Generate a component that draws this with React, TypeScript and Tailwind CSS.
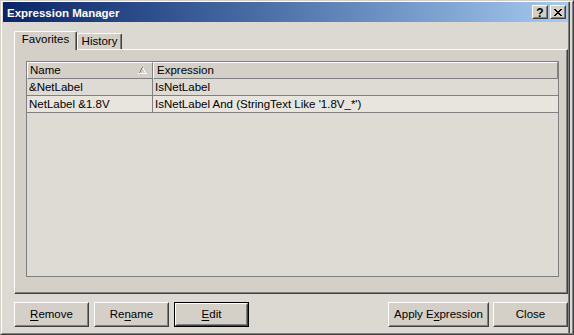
import React from "react";

function Raised({ className = "", children }: { className?: string; children?: React.ReactNode }) {
  return (
    <div className={`border border-t-white border-l-white border-r-[#404040] border-b-[#404040] bg-[#d4d0c8] ${className}`}>
      <div className="w-full h-full border border-t-[#d4d0c8] border-l-[#d4d0c8] border-r-[#808080] border-b-[#808080] flex items-center justify-center">
        {children}
      </div>
    </div>
  );
}

function CloseGlyph() {
  const rows = [
    [0, 1, 6, 7],
    [1, 2, 5, 6],
    [2, 3, 4, 5],
    [3, 4],
    [2, 3, 4, 5],
    [1, 2, 5, 6],
    [0, 1, 6, 7],
  ];
  return (
    <svg width="8" height="7" viewBox="0 0 8 7" shapeRendering="crispEdges">
      {rows.map((cols, y) =>
        cols.map((x) => <rect key={`${x}-${y}`} x={x} y={y} width="1" height="1" fill="#000" />)
      )}
    </svg>
  );
}

function SortUp() {
  return (
    <svg width="9" height="7" viewBox="0 0 9 7" shapeRendering="crispEdges">
      <rect x="4" y="0" width="1" height="1" fill="#808080" />
      <rect x="3" y="1" width="1" height="2" fill="#808080" />
      <rect x="5" y="1" width="1" height="2" fill="#ffffff" />
      <rect x="2" y="3" width="1" height="2" fill="#808080" />
      <rect x="6" y="3" width="1" height="2" fill="#ffffff" />
      <rect x="1" y="5" width="1" height="1" fill="#808080" />
      <rect x="7" y="5" width="1" height="1" fill="#ffffff" />
      <rect x="0" y="6" width="9" height="1" fill="#ffffff" />
    </svg>
  );
}

export default function App() {
  return (
    <div className="w-[574px] h-[335px] font-['Liberation_Sans',Arial,sans-serif] text-[11.5px] leading-[13px] text-black border border-t-[#d4d0c8] border-l-[#d4d0c8] border-r-[#404040] border-b-[#404040] bg-[#dcd9d3] select-none">
      <div className="w-full h-full border border-t-white border-l-white border-r-[#808080] border-b-[#808080] pl-[1px] pr-[2px] flex">
        <div className="flex-1 min-w-0 flex flex-col">
          {/* Title bar */}
          <div className="h-[20px] bg-linear-to-r from-[#0a246a] to-[#a6caf0] flex items-center pl-[4px] pr-[2px]">
            <span className="text-white font-bold text-[11.5px] leading-[14px] pt-[2px]">Expression Manager</span>
            <div className="ml-auto flex gap-[2px]">
              <Raised className="w-[16px] h-[14px]">
                <span className="font-bold text-[12px] leading-[10px] pt-[1px]">?</span>
              </Raised>
              <Raised className="w-[16px] h-[14px]">
                <CloseGlyph />
              </Raised>
            </div>
          </div>

          {/* Content */}
          <div className="flex-1 flex flex-col pl-[11px] pt-[9px] pb-[6px]">
            {/* Tabs */}
            <div className="h-[18px] flex items-end relative z-10">
              <div className="w-[63px] h-[19px] -mb-[1px] bg-[#d4d0c8] border-t border-l border-t-white border-l-white border-r border-r-[#404040] shadow-[inset_-1px_0_0_#808080] rounded-t-[2px] text-center pt-[1px]">
                Favorites
              </div>
              <div className="w-[45px] h-[16px] bg-[#d4d0c8] border-t border-l border-t-white border-l-white border-r border-r-[#404040] shadow-[inset_-1px_0_0_#808080] rounded-t-[2px] text-center pt-[1px]">
                History
              </div>
            </div>

            {/* Panel */}
            <div className="h-[245px] bg-[#d4d0c8] border border-t-white border-l-white border-r-[#404040] border-b-[#404040] shadow-[inset_-1px_-1px_0_#808080] pl-[11px] pt-[11px] pr-[8px] pb-[16px]">
              <div className="w-full h-full border border-[#808080] bg-[#dedbd5] flex flex-col">
                {/* Header */}
                <div className="flex h-[17px] bg-[#d4d0c8]">
                  <div className="w-[126px] border border-t-white border-l-white border-r-[#808080] border-b-[#808080] flex items-center justify-between pl-[2px] pr-[5px]">
                    <span>Name</span>
                    <SortUp />
                  </div>
                  <div className="flex-1 border border-t-white border-l-white border-r-[#808080] border-b-[#808080] flex items-center pl-[3px]">
                    Expression
                  </div>
                </div>
                {/* Rows */}
                <div className="flex h-[17px] border-b border-[#808080] bg-[#dedbd5]">
                  <div className="w-[126px] border-r border-[#808080] flex items-center pl-[2px]">&amp;NetLabel</div>
                  <div className="flex-1 flex items-center pl-[2px]">IsNetLabel</div>
                </div>
                <div className="flex h-[17px] border-b border-[#808080] bg-[#e8e5de]">
                  <div className="w-[126px] border-r border-[#808080] flex items-center pl-[2px]">NetLabel &amp;1.8V</div>
                  <div className="flex-1 flex items-center pl-[2px]">IsNetLabel And (StringText Like '1.8V_*')</div>
                </div>
              </div>
            </div>

            {/* Buttons */}
            <div className="mt-[8px] h-[25px] flex justify-between">
              <div className="flex gap-[5px]">
                <Raised className="w-[75px] h-[25px]">
                  <span><span className="underline underline-offset-[2px]">R</span>emove</span>
                </Raised>
                <Raised className="w-[75px] h-[25px]">
                  <span>Re<span className="underline underline-offset-[2px]">n</span>ame</span>
                </Raised>
                <div className="w-[75px] h-[25px] border border-black">
                  <Raised className="w-full h-full">
                    <span><span className="underline underline-offset-[2px]">E</span>dit</span>
                  </Raised>
                </div>
              </div>
              <div className="flex gap-[4px]">
                <Raised className="w-[101px] h-[25px]">
                  <span>Apply E<span className="underline underline-offset-[2px]">x</span>pression</span>
                </Raised>
                <Raised className="w-[75px] h-[25px]">
                  <span>Close</span>
                </Raised>
              </div>
            </div>
          </div>
        </div>
        <div className="w-[2px] border-l border-l-[#808080] border-r border-r-[#404040]" />
      </div>
    </div>
  );
}
